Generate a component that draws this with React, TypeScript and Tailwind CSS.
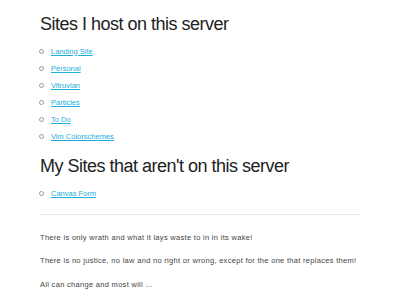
const hosted = [
  "Landing Site",
  "Personal",
  "Vitruvian",
  "Particles",
  "To Do",
  "Vim Colorschemes",
];

const elsewhere = ["Canvas Form"];

function SiteList({ items }: { items: string[] }) {
  return (
    <ul className="text-[7.5px] leading-[12px] mb-[12.5px]">
      {items.map((s) => (
        <li key={s} className="flex items-center mb-[5px] last:mb-0">
          <span className="w-[5px] h-[5px] rounded-full border border-[#9a9a9a] ml-[-1px] mr-[7px]" />
          <a href="#" className="text-[#1eaedb] underline">
            {s}
          </a>
        </li>
      ))}
    </ul>
  );
}

export default function App() {
  return (
    <div className="min-h-screen bg-white font-['Liberation_Sans',Arial,sans-serif] text-[#222] px-10 pt-[13px]">
      <h2 className="text-[18px] leading-[22.5px] tracking-[-0.5px] mb-[10px]">
        Sites I host on this server
      </h2>
      <SiteList items={hosted} />

      <h2 className="text-[18px] leading-[22.5px] tracking-[-0.5px] mb-[10px] mt-[1px]">
        My Sites that aren't on this server
      </h2>
      <SiteList items={elsewhere} />

      <hr className="border-t border-[#e6e6e6] mt-[14px] mb-[17px]" />

      <div className="text-[7.5px] leading-[12px] tracking-[0.3px] text-[#444] space-y-[11.5px]">
        <p>There is only wrath and what it lays waste to in in its wake!</p>
        <p>There is no justice, no law and no right or wrong, except for the one that replaces them!</p>
        <p>All can change and most will ...</p>
      </div>
    </div>
  );
}
